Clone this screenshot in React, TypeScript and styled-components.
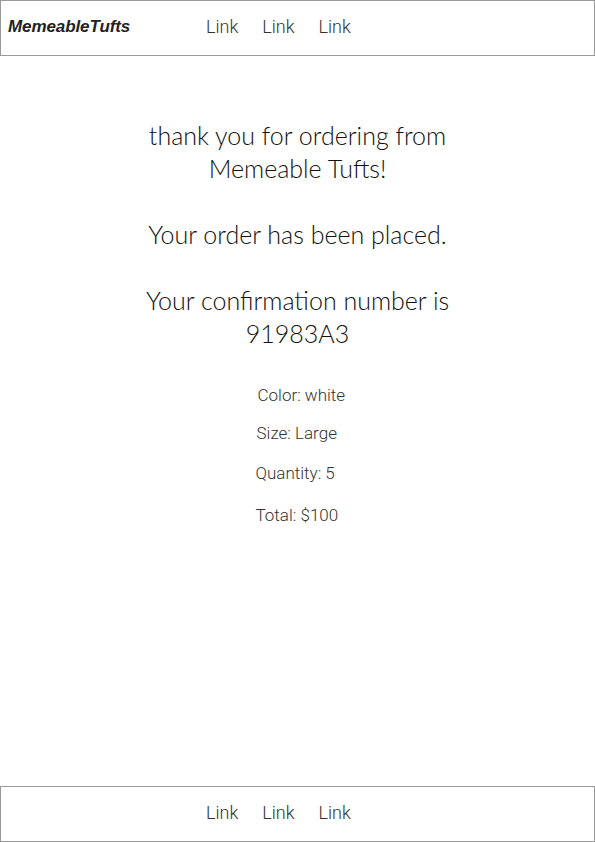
import React from "react";
import styled, { createGlobalStyle } from "styled-components";

const Global = createGlobalStyle`
  html, body { margin: 0; padding: 0; background: #fff; }
  * { box-sizing: border-box; }
`;

const Page = styled.div`
  width: 595px;
  height: 842px;
  display: flex;
  flex-direction: column;
`;

const Bar = styled.nav`
  height: 56px;
  border: 1px solid #9a9a9a;
  display: flex;
  align-items: center;
  padding-left: 7px;
  padding-bottom: 3px;
`;

const Brand = styled.span`
  font-family: "Liberation Sans", Arial, sans-serif;
  font-weight: 700;
  font-style: italic;
  font-size: 17px;
  letter-spacing: -0.1px;
  color: #222;
  width: 198px;
`;

const Links = styled.div<{ $offset?: number }>`
  display: flex;
  gap: 24px;
  margin-left: ${(p) => p.$offset ?? 0}px;
`;

const NavLink = styled.a`
  font-family: Roboto, "Liberation Sans", sans-serif;
  font-weight: 300;
  font-size: 18px;
  color: #333;
  text-decoration: none;
`;

const Main = styled.main`
  flex: 1;
  display: flex;
  flex-direction: column;
  align-items: center;
  padding-top: 63px;
`;

const Message = styled.p`
  margin: 0 0 33px;
  width: 340px;
  text-align: center;
  font-family: Lato, "Noto Sans", sans-serif;
  font-weight: 300;
  font-size: 25px;
  line-height: 33px;
  color: #111;
`;

const Details = styled.div`
  display: flex;
  flex-direction: column;
  align-items: flex-start;
  width: 100px;
  margin-left: 16px;
  margin-top: 2px;
`;

const Detail = styled.div<{ $gap: number; $indent?: number }>`
  font-family: Roboto, "Liberation Sans", sans-serif;
  font-weight: 300;
  font-size: 17px;
  line-height: 20px;
  color: #333;
  margin-top: ${(p) => p.$gap}px;
  padding-left: ${(p) => p.$indent ?? 0}px;
`;

const Footer = styled(Bar)``;

const NavGroup = ({ offset }: { offset: number }) => (
  <Links $offset={offset}>
    <NavLink href="#">Link</NavLink>
    <NavLink href="#">Link</NavLink>
    <NavLink href="#">Link</NavLink>
  </Links>
);

export default function App() {
  return (
    <Page>
      <Global />
      <Bar>
        <Brand>MemeableTufts</Brand>
        <NavGroup offset={0} />
      </Bar>
      <Main>
        <Message>
          thank you for ordering from
          <br />
          Memeable Tufts!
        </Message>
        <Message>Your order has been placed.</Message>
        <Message>
          Your confirmation number is
          <br />
          91983A3
        </Message>
        <Details>
          <Detail $gap={0} $indent={2}>Color: white</Detail>
          <Detail $gap={18} $indent={1}>Size: Large</Detail>
          <Detail $gap={20}>Quantity: 5</Detail>
          <Detail $gap={22}>Total: $100</Detail>
        </Details>
      </Main>
      <Footer>
        <NavGroup offset={198} />
      </Footer>
    </Page>
  );
}
